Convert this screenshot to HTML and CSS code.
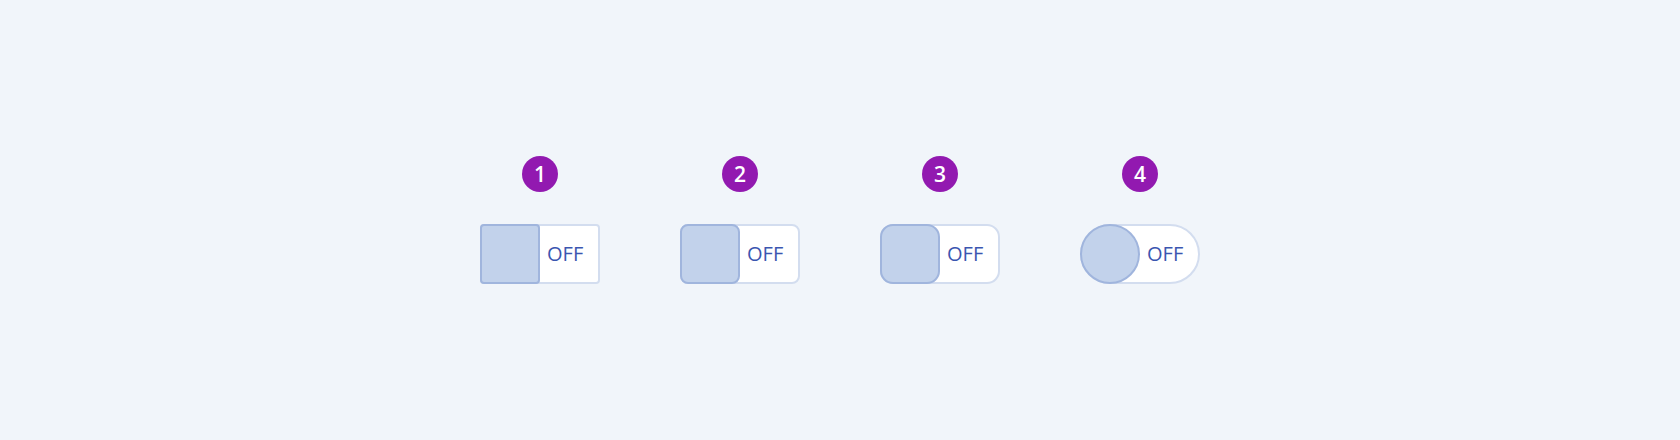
FILE: index.html
```html
<!DOCTYPE html>
<html lang="en">
<head>
    <meta charset="UTF-8">
    <meta name="viewport" content="width=device-width, initial-scale=1.0">
    <title>Toggle variants</title>
    <link rel="stylesheet" href="styles.css">
</head>
<body>
    <div class="row">
        <div class="item">
            <span class="badge">1</span>
            <div class="toggle r1">
                <span class="knob"></span>
                <span class="label">OFF</span>
            </div>
        </div>
        <div class="item">
            <span class="badge">2</span>
            <div class="toggle r2">
                <span class="knob"></span>
                <span class="label">OFF</span>
            </div>
        </div>
        <div class="item">
            <span class="badge">3</span>
            <div class="toggle r3">
                <span class="knob"></span>
                <span class="label">OFF</span>
            </div>
        </div>
        <div class="item">
            <span class="badge">4</span>
            <div class="toggle r4">
                <span class="knob"></span>
                <span class="label">OFF</span>
            </div>
        </div>
    </div>
</body>
</html>
```

FILE: styles.css
```css
body {
    margin: 0;
    height: 440px;
    background-color: #f1f5fa;
    font-family: "Open Sans", "Noto Sans", sans-serif;
    display: flex;
    align-items: center;
    justify-content: center;
}

.row {
    display: flex;
    gap: 80px;
}

.item {
    width: 120px;
    display: flex;
    flex-direction: column;
    align-items: center;
    gap: 32px;
}

.badge {
    width: 36px;
    height: 36px;
    border-radius: 50%;
    background-color: #9219b0;
    color: white;
    font-size: 21px;
    font-weight: 600;
    display: flex;
    align-items: center;
    justify-content: center;
    line-height: 1;
}

.toggle {
    box-sizing: border-box;
    width: 120px;
    height: 60px;
    background-color: white;
    border: 2px solid #d3ddef;
    display: flex;
    align-items: center;
}

.knob {
    box-sizing: border-box;
    width: 60px;
    height: 60px;
    margin: -2px 0 -2px -2px;
    flex-shrink: 0;
    background-color: #c2d2eb;
    border: 2px solid #a0b5dd;
}

.label {
    margin-left: 7px;
    font-size: 20px;
    color: #3b56b0;
    line-height: 1;
}

.r1, .r1 .knob {
    border-radius: 4px;
}

.r2, .r2 .knob {
    border-radius: 8px;
}

.r3, .r3 .knob {
    border-radius: 13px;
}

.r4, .r4 .knob {
    border-radius: 30px;
}
```
